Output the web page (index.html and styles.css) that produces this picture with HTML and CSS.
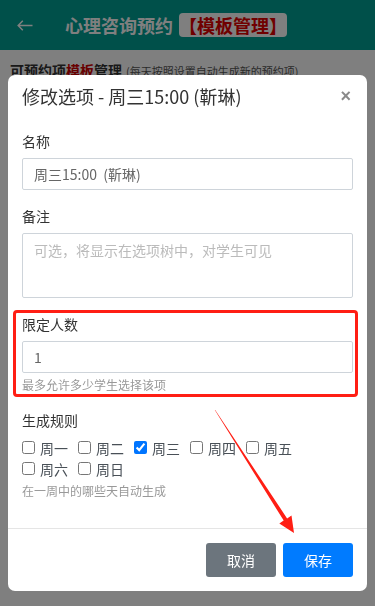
FILE: index.html
```html
<html>
<head>
	<meta http-equiv="content-type" content="text/html;charset=utf-8">
	<title>心理咨询预约</title>
	<link rel="stylesheet" href="styles.css">
</head>
<body>
	<div class="topbar">
		<svg class="back" width="16" height="11" viewBox="0 0 16 11"><path d="M15.5 5.5H1.2M5.8 0.8L1.2 5.5L5.8 10.2" fill="none" stroke="#fff" stroke-width="1.5"/></svg>
		<span class="title">心理咨询预约</span>
		<span class="badge">【模板管理】</span>
	</div>
	<div class="intro">
		<b>可预约项<em>模板</em>管理</b><small>(每天按照设置自动生成新的预约项)</small>
	</div>

	<div class="backdrop"></div>

	<div class="modal-wrap">
		<div class="modal">
			<div class="modal-header">
				<h5>修改选项 - 周三15:00 (靳琳)</h5>
				<span class="close">×</span>
			</div>
			<div class="modal-body">
				<div class="form-group">
					<label>名称</label>
					<input class="form-control" type="text" value="周三15:00  (靳琳)">
				</div>
				<div class="form-group">
					<label>备注</label>
					<textarea class="form-control area" placeholder="可选，将显示在选项树中，对学生可见"></textarea>
				</div>
				<div class="form-group marked">
					<label>限定人数</label>
					<input class="form-control" type="text" value="1">
					<div class="help">最多允许多少学生选择该项</div>
				</div>
				<div class="form-group last">
					<label>生成规则</label>
					<div class="days">
						<span class="day"><input type="checkbox">周一</span>
						<span class="day"><input type="checkbox">周二</span>
						<span class="day"><input type="checkbox" checked>周三</span>
						<span class="day"><input type="checkbox">周四</span>
						<span class="day"><input type="checkbox">周五</span>
						<span class="day"><input type="checkbox">周六</span>
						<span class="day"><input type="checkbox">周日</span>
					</div>
					<div class="help">在一周中的哪些天自动生成</div>
				</div>
			</div>
			<div class="modal-footer">
				<button class="btn btn-secondary">取消</button>
				<button class="btn btn-primary">保存</button>
			</div>
		</div>
	</div>

	<svg class="mark-arrow" width="375" height="606" viewBox="0 0 375 606">
		<polygon points="214.8,410.1 215.2,409.9 287.1,518.4 291.5,515.6 294,533 279.3,523.4 283.7,520.6" fill="#ff1e14"/>
	</svg>
</body>
</html>
```

FILE: styles.css
```css
body{
	margin:0;
	padding:0;
	background:#fff;
	color:#333;
	font-family:"Noto Sans CJK SC","Noto Sans",sans-serif;
}

.topbar{
	height:50px;
	background:#00a094;
	display:flex;
	align-items:center;
	padding-left:17px;
}
.back{
	margin-right:32px;
}
.title{
	font-size:18px;
	font-weight:700;
	line-height:24px;
	color:#fff;
}
.badge{
	margin-left:6px;
	background:#fff;
	color:#e00000;
	border-radius:4px;
	font-size:18px;
	font-weight:700;
	line-height:24px;
}

.intro{
	padding:10px;
	font-size:14px;
	line-height:20px;
}
.intro b{
	color:#333;
}
.intro em{
	font-style:normal;
	color:#d00000;
}
.intro small{
	font-size:11px;
	color:#555;
	margin-left:4px;
}

.backdrop{
	position:fixed;
	top:0;
	left:0;
	right:0;
	bottom:0;
	background:rgba(0,0,0,.5);
}

.modal-wrap{
	position:fixed;
	top:0;
	left:0;
	right:0;
	bottom:0;
	padding:75px 8px 0;
}
.modal{
	background:#fff;
	border-radius:7px;
}
.modal-header{
	display:flex;
	justify-content:space-between;
	align-items:center;
	padding:7px 14px;
}
.modal-header h5{
	margin:0;
	font-size:18px;
	font-weight:normal;
	line-height:28px;
	color:#333;
}
.close{
	font-family:"Liberation Sans",sans-serif;
	font-size:18px;
	font-weight:700;
	line-height:28px;
	color:#8a8a8a;
	margin-right:2px;
}

.modal-body{
	padding:14px 14px 12px;
}
.form-group{
	margin-bottom:16px;
}
.form-group label{
	display:block;
	font-size:14px;
	line-height:21px;
	margin-bottom:6px;
	color:#333;
}
.form-control{
	display:block;
	width:100%;
	box-sizing:border-box;
	height:32px;
	padding:0 11px;
	border:1px solid #ced4da;
	border-radius:2px;
	font-family:inherit;
	font-size:14px;
	color:#666;
	background:#fff;
}
.area{
	height:65px;
	padding:6px 11px;
	line-height:21px;
	resize:none;
}
.area::placeholder{
	color:#bbb;
}
.help{
	margin-top:3px;
	font-size:12px;
	line-height:18px;
	color:#999;
}

.marked{
	position:relative;
}
.marked::after{
	content:"";
	position:absolute;
	top:-4px;
	left:-9px;
	right:-5px;
	bottom:-3px;
	border:3px solid #ff1e14;
	border-radius:4px;
}

.days{
	display:flex;
	flex-wrap:wrap;
}
.day{
	display:flex;
	align-items:center;
	height:21px;
	margin-right:10px;
	font-size:14px;
	color:#495057;
}
.day input{
	width:13px;
	height:13px;
	margin:0 5px 0 0;
}

.modal-footer{
	border-top:1px solid #e5e5e5;
	padding:14px;
	display:flex;
	justify-content:flex-end;
	gap:7px;
}
.btn{
	width:70px;
	height:34px;
	border:0;
	border-radius:3px;
	color:#fff;
	font-family:inherit;
	font-size:14px;
}
.btn-secondary{
	background:#6c757d;
}
.btn-primary{
	background:#007bff;
}

.mark-arrow{
	position:fixed;
	top:0;
	left:0;
}
```
